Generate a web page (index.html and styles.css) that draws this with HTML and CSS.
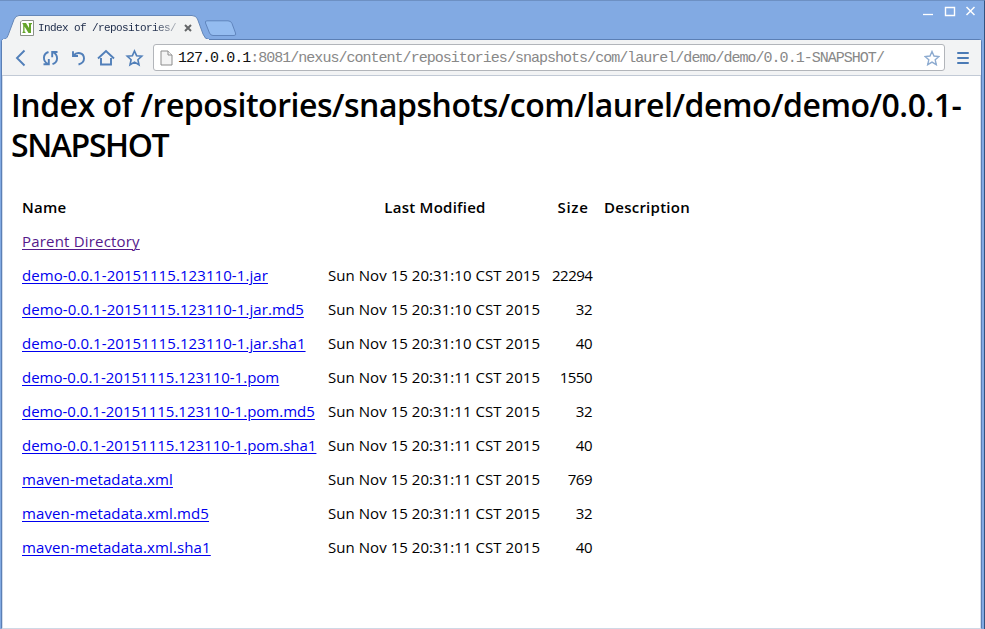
FILE: index.html
```html
<!DOCTYPE html>
<html lang="en">
<head>
<meta charset="utf-8">
<title>Index of /repositories/snapshots/com/laurel/demo/demo/0.0.1-SNAPSHOT</title>
<link rel="stylesheet" href="styles.css">
</head>
<body>
<div class="window">
  <header class="titlebar">
    <div class="tab">
      <svg class="tab-shape" width="206" height="25" viewBox="0 0 206 25"><path d="M0 25V24.500C3 24 4 23 5 20.500L11 4.500Q12.500.5 16 .5H189Q193 .5 194.500 4L200 19Q202 24.500 206 24.500V25Z" fill="#f2f3f3" stroke="#6587b8"/><path d="M0 24.500H206" stroke="#f2f3f3"/></svg>
      <svg class="favicon" width="14" height="16" viewBox="0 0 14 16"><path d="M.5 2 2 .5H13.500V15.500H.5Z" fill="#fff" stroke="#8b9188"/><path d="M2.500 3H6l3 5V4.500L8.500 3H12v1l-1 .5V13H8.500L4.500 6.500v5l1 .5v1h-3v-1l.7-.5v-7l-.7-.5Z" fill="#64a52a"/></svg>
      <span class="tab-title">Index of /repositories/</span>
      <svg class="tab-close" width="8" height="8" viewBox="0 0 8 8"><path d="M1 1l6 6M7 1 1 7" stroke="#646668" stroke-width="2"/></svg>
    </div>
    <svg class="new-tab" width="33" height="17" viewBox="0 0 33 17"><path d="M3 .8H24Q27 .8 28 3.500L31.500 13Q32.500 15.500 30 15.500H9Q6.500 15.500 5.500 13L1.500 3Q.8.8 3 .8Z" fill="#94bcf0" stroke="#6085bd"/></svg>
    <svg class="controls" width="52" height="12" viewBox="0 0 52 12" fill="none" stroke="#fff"><path d="M0 9.500H10" stroke-width="1.300"/><path d="M22.500 2.500h9v8h-9Z" stroke-width="1.400"/><path d="m43.500 2 8 8m0-8-8 8" stroke-width="1.500"/></svg>
  </header>
  <main class="frame">
    <nav class="toolbar">
      <svg class="nav-icons" width="130" height="20" viewBox="0 0 130 20" fill="none" stroke="#517fb9" stroke-width="1.900">
        <path d="M10.500 2.500 3 10l7.500 7.500"/>
        <path d="M34.500 4C28.500 6 28.500 13 34 16M29.500 16.200H34.800V11M38.500 16.200C44.500 14 44.500 7 39 4.200M43.500 4H38.200V9.200"/>
        <path d="M59 3.200V8H64M59.500 7.500C63 3.500 70 4.500 70 10.500Q70 15 64.500 16.500"/>
        <path d="M84 10.500 92 3l8 7.500M87 10v6.500h10V10"/>
        <path stroke-width="1.600" d="m120.500 3 2.100 4.700 5.200.5-3.900 3.500 1.100 5.100-4.500-2.700-4.500 2.700 1.100-5.100-3.900-3.500 5.200-.5Z"/>
      </svg>
      <div class="address">
        <svg width="13" height="16" viewBox="0 0 13 16" fill="#f4f4f4" stroke="#8c8c8c"><path d="M1 1h7l4 4v10H1Z"/><path d="M8 1v4h4"/></svg>
        <span class="url"><b>127.0.0.1</b>:8081/nexus/content/repositories/snapshots/com/laurel/demo/demo/0.0.1-SNAPSHOT/</span>
        <svg class="bookmark" width="16" height="16" viewBox="0 0 16 16" fill="none" stroke="#8dabd0" stroke-width="1.400"><path d="m8 1.500 2 4.500 5 .5-3.800 3.300 1.100 4.900L8 12.100l-4.300 2.600 1.100-4.900L1 6.500 6 6Z"/></svg>
      </div>
      <svg class="menu" width="12" height="12" viewBox="0 0 12 12"><path d="M1 1h10M1 6h10M1 11h10" stroke="#4a7ab5" stroke-width="2" stroke-linecap="round"/></svg>
    </nav>
    <section class="page">
      <h1><span class="h-first">Index of /repositories/snapshots/com/laurel/demo/demo/0.0.1-</span><br><span class="h-second">SNAPSHOT</span></h1>
      <table>
        <colgroup><col class="c-name"><col class="c-date"><col class="c-size"><col class="c-desc"></colgroup>
        <thead><tr><th class="left">Name</th><th>Last Modified</th><th class="size">Size</th><th class="left">Description</th></tr></thead>
        <tbody>
        <tr><td><a class="visited" href="#">Parent Directory</a></td><td></td><td></td><td></td></tr>
        <tr><td><a class="jar" href="#">demo-0.0.1-20151115.123110-1.jar</a></td><td>Sun Nov 15 20:31:10 CST 2015</td><td>22294</td><td></td></tr>
        <tr><td><a class="jar" href="#">demo-0.0.1-20151115.123110-1.jar.md5</a></td><td>Sun Nov 15 20:31:10 CST 2015</td><td>32</td><td></td></tr>
        <tr><td><a class="jar" href="#">demo-0.0.1-20151115.123110-1.jar.sha1</a></td><td>Sun Nov 15 20:31:10 CST 2015</td><td>40</td><td></td></tr>
        <tr><td><a href="#">demo-0.0.1-20151115.123110-1.pom</a></td><td>Sun Nov 15 20:31:11 CST 2015</td><td>1550</td><td></td></tr>
        <tr><td><a href="#">demo-0.0.1-20151115.123110-1.pom.md5</a></td><td>Sun Nov 15 20:31:11 CST 2015</td><td>32</td><td></td></tr>
        <tr><td><a href="#">demo-0.0.1-20151115.123110-1.pom.sha1</a></td><td>Sun Nov 15 20:31:11 CST 2015</td><td>40</td><td></td></tr>
        <tr><td><a class="meta" href="#">maven-metadata.xml</a></td><td>Sun Nov 15 20:31:11 CST 2015</td><td>769</td><td></td></tr>
        <tr><td><a class="meta" href="#">maven-metadata.xml.md5</a></td><td>Sun Nov 15 20:31:11 CST 2015</td><td>32</td><td></td></tr>
        <tr><td><a class="meta" href="#">maven-metadata.xml.sha1</a></td><td>Sun Nov 15 20:31:11 CST 2015</td><td>40</td><td></td></tr>
        </tbody>
      </table>
    </section>
  </main>
</div>
</body>
</html>
```
FILE: styles.css
```css
* { box-sizing: border-box; }
body { margin: 0; overflow: hidden; font-family: "Trebuchet MS", "Open Sans", sans-serif; color: #000; }
svg { display: block; flex: none; }
.window { height: 629px; display: flex; flex-direction: column; background: #82aae3; border-top: 1px solid #6d90c3; border-right: 1px solid #34527f; padding: 0 2px 0 1px; }
.titlebar { height: 38px; flex: none; display: flex; align-items: flex-start; }
.tab { position: relative; z-index: 1; width: 206px; height: 25px; margin: 14px 0 0 2px; display: flex; align-items: center; padding-left: 17px; }
.tab-shape { position: absolute; left: 0; top: 0; }
.favicon, .tab-title, .tab-close { position: relative; }
.tab-title { margin-left: 4px; width: 138px; padding-top: 1px; white-space: pre; font: 11px/14px "Liberation Mono", monospace; letter-spacing: -0.6px; background: linear-gradient(90deg, #1d2b49 84%, #aeb3bb); -webkit-background-clip: text; color: transparent; }
.tab-close { margin-left: 8px; }
.new-tab { margin: 19px 0 0 -5px; }
.controls { margin: 4px 7px 0 auto; }
.frame { flex: 1; min-height: 0; display: flex; flex-direction: column; background: #fff; border: 1px solid #5b7fb5; border-bottom: 1px solid #d0d8e5; border-radius: 3px 3px 0 0; }
.toolbar { height: 36px; flex: none; display: flex; align-items: center; background: #f2f3f4; border-bottom: 1px solid #c2cad6; padding-left: 12px; }
.nav-icons { margin-top: 1px; }
.address { width: 792px; height: 27px; margin-left: 9px; display: flex; align-items: center; background: #fff; border: 1px solid #b2b5ba; border-radius: 3px; padding: 0 4px 0 6px; }
.url { margin-left: 5px; padding-top: 3px; white-space: pre; font: 15px/20px "Liberation Mono", monospace; letter-spacing: -0.98px; color: #888; }
.url b { font-weight: 400; color: #111; }
.bookmark { margin-left: auto; }
.menu { margin-left: 12px; }
.page { flex: 1; border: solid #d3dcea; border-width: 0 1px; padding: 9px 0 0 8px; }
h1 { margin: 0; font-size: 32px; line-height: 40px; font-weight: 600; white-space: nowrap; }
.h-first { letter-spacing: -0.475px; }
.h-second { letter-spacing: -1.4px; }
table { margin: 25px 0 0 5px; border-collapse: collapse; table-layout: fixed; width: 690px; font-size: 15px; line-height: 20px; white-space: nowrap; }
.c-name { width: 306px; }
.c-date { width: 224px; }
.c-size { width: 52px; }
th, td { height: 34px; padding: 0 6px; }
th { font-weight: 600; letter-spacing: 0.25px; }
th.size { letter-spacing: 0.7px; }
th:not(.left) { padding: 0 5px 0 7px; }
.left { text-align: left; }
td:nth-child(2) { letter-spacing: 0.05px; }
td:nth-child(3) { text-align: right; letter-spacing: -0.5px; }
a { color: #0000ee; text-underline-offset: 2px; text-decoration-thickness: 1px; }
.jar { letter-spacing: 0.08px; }
.meta { letter-spacing: 0.12px; }
.visited { color: #551a8b; letter-spacing: 0.19px; }
```
